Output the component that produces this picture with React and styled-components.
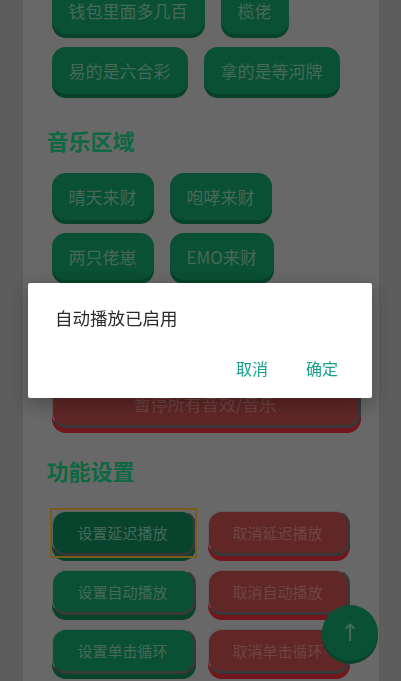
import React from 'react'
import styled, { createGlobalStyle, css } from 'styled-components'

/* Global */
const Global = createGlobalStyle`
  html, body {
    margin: 0;
    padding: 0;
    background: #bababa;
    font-family: "Noto Sans CJK SC", "Noto Sans", sans-serif;
    overflow: hidden;
  }
`

/* Page */
const Page = styled.div`
  height: 681px;
  overflow: hidden;
`

const Panel = styled.main`
  display: flow-root;
  width: 356px;
  height: 681px;
  margin: 0 auto;
  background: #d0d0d0;
  padding: 0 24px;
  box-sizing: border-box;
`

/* the list is scrolled, top row is cut */
const Scrolled = styled.div`
  margin-top: -13px;
`

const Heading = styled.h2`
  margin: ${({ $top }) => $top}px 0 ${({ $bottom }) => $bottom}px;
  font-size: 22px;
  line-height: 30px;
  font-weight: 700;
  color: #18d084;
`

const Group = styled.div`
  display: flex;
  flex-wrap: wrap;
  gap: 13px 16px;
  padding-left: 5px;
`

const Btn = styled.button`
  height: 47px;
  padding: 0 17px;
  border: none;
  border-radius: 14px;
  background: #14a068;
  color: #8cd2b0;
  font-family: inherit;
  font-size: 17px;
  box-shadow: 0 4px 0 #0e8452;
`

const tones = {
  green: css`
    background: #14a068;
    color: #8cd2b0;
    box-shadow: 0 5px 0 #0e8452;
  `,
  red: css`
    background: #c24e4e;
    color: #dc8888;
    box-shadow: 0 5px 0 #e42a38;
  `,
  active: css`
    background: #0e865a;
    color: #8cd2b0;
    box-shadow: 0 5px 0 #0e8452;
  `,
}

const Bevel = styled.button`
  width: 100%;
  height: 45px;
  border-radius: 14px;
  border-style: solid;
  border-width: 1px 3px 3px 1px;
  border-color: #c0c0c0 #707070 #707070 #c0c0c0;
  font-family: inherit;
  font-size: 15px;
  padding: 0;
  ${({ $tone }) => tones[$tone]}
`

/* focus ring around the pressed button */
const Focus = styled.div`
  position: relative;
  ${({ $on }) => $on && css`
    &::after {
      content: '';
      position: absolute;
      left: -2px;
      right: -1px;
      top: -3px;
      bottom: -2px;
      border: 2px solid #f0b838;
      pointer-events: none;
    }
  `}
`

const WideBtn = styled(Bevel)`
  width: 309px;
  height: 47px;
  margin-left: 5px;
  margin-top: 101px;
  font-size: 17px;
`

const Grid = styled.div`
  display: grid;
  grid-template-columns: 144px 142px;
  column-gap: 12px;
  row-gap: 14px;
  padding-left: 5px;
`

/* Floating top button */
const Fab = styled.button`
  position: fixed;
  right: 23px;
  bottom: 20px;
  width: 56px;
  height: 56px;
  border-radius: 50%;
  border: none;
  background: #14a068;
  color: #8cd2b0;
  font-size: 24px;
  box-shadow: 0 3px 0 #0e8452;
  font-family: "DejaVu Sans", sans-serif;
`

/* Dialog */
const Dim = styled.div`
  position: fixed;
  inset: 0;
  background: rgba(0, 0, 0, 0.5);
  display: flex;
  align-items: center;
  justify-content: center;
  z-index: 10;
`

const Dialog = styled.div`
  width: 344px;
  height: 115px;
  box-sizing: border-box;
  background: #fff;
  border-radius: 2px;
  box-shadow: 0 6px 20px rgba(0, 0, 0, 0.3);
  display: flex;
  flex-direction: column;
  margin-left: -1px;
`

const Title = styled.div`
  padding: 22px 27px 0;
  font-size: 17.5px;
  line-height: 25px;
  color: #2b2b2b;
`

const Actions = styled.div`
  margin-top: auto;
  display: flex;
  justify-content: flex-end;
  gap: 22px;
  padding: 0 26px 12px;
`

const Action = styled.button`
  height: 36px;
  padding: 0 8px;
  border: none;
  background: none;
  font-family: inherit;
  font-size: 16px;
  color: #17a08a;
`

const top = [['钱包里面多几百', '榄佬'], ['易的是六合彩', '拿的是等河牌']]
const music = ['晴天来财', '咆哮来财', '两只佬崽', 'EMO来财']
const funcs = [
  ['设置延迟播放', '取消延迟播放'],
  ['设置自动播放', '取消自动播放'],
  ['设置单击循环', '取消单击循环'],
]

export default function App() {
  return (
    <Page>
      <Global />
      <Panel>
        <Scrolled>
          <Group>
            {top.flat().map(t => <Btn key={t}>{t}</Btn>)}
          </Group>

          <Heading $top={31} $bottom={18}>音乐区域</Heading>
          <Group>
            {music.map(t => <Btn key={t}>{t}</Btn>)}
          </Group>

          <WideBtn $tone="red">暂停所有音效/音乐</WideBtn>

          <Heading $top={27} $bottom={26}>功能设置</Heading>
          <Grid>
            {funcs.map(([a, b], i) => (
              <React.Fragment key={a}>
                <Focus $on={i === 0}>
                  <Bevel $tone={i === 0 ? 'active' : 'green'}>{a}</Bevel>
                </Focus>
                <Focus>
                  <Bevel $tone="red">{b}</Bevel>
                </Focus>
              </React.Fragment>
            ))}
          </Grid>
        </Scrolled>
      </Panel>

      <Fab>↑</Fab>

      <Dim>
        <Dialog>
          <Title>自动播放已启用</Title>
          <Actions>
            <Action>取消</Action>
            <Action>确定</Action>
          </Actions>
        </Dialog>
      </Dim>
    </Page>
  )
}
